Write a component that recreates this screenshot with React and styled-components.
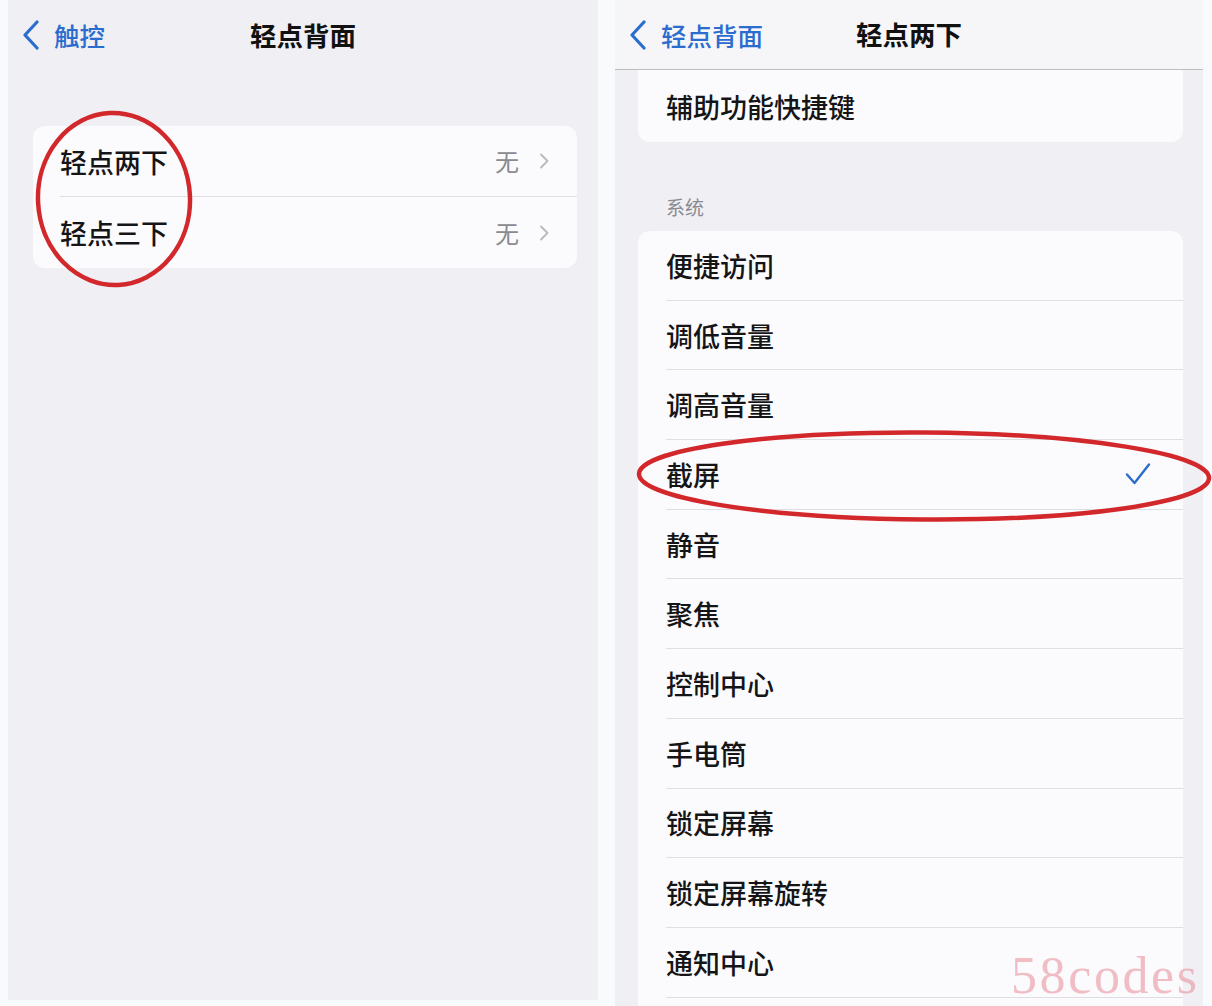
import React from 'react';
import styled, { createGlobalStyle } from 'styled-components';

const BLUE = '#2b6ccf';

const GlobalStyle = createGlobalStyle`
  html, body {
    margin: 0;
    padding: 0;
    background: #f8fafb;
  }
  body {
    font-family: "Noto Sans CJK SC", "Noto Sans", sans-serif;
    color: #151517;
  }
`;

const Page = styled.div`
  position: relative;
  display: flex;
  gap: 17px;
  width: 1212px;
  height: 1006px;
  padding-left: 8px;
  box-sizing: border-box;
  overflow: hidden;
`;

const Screen = styled.section`
  position: relative;
  display: flex;
  flex-direction: column;
  width: ${(p) => p.$width}px;
  height: ${(p) => p.$height}px;
  background: #efeff4;
  overflow: hidden;
  flex-shrink: 0;
`;

const NavBar = styled.header`
  display: grid;
  grid-template-columns: 1fr auto 1fr;
  align-items: center;
  height: 70px;
  padding: 0 14px;
  box-sizing: border-box;
  flex-shrink: 0;
  background: ${(p) => (p.$bar ? '#f6f6f8' : 'transparent')};
  border-bottom: ${(p) => (p.$bar ? '1px solid #bcbcc1' : 'none')};
`;

const BackLink = styled.div`
  display: flex;
  align-items: center;
  gap: 14px;
  color: ${BLUE};
  font-size: 25.5px;
  font-weight: 500;
  line-height: 1;
`;

const NavTitle = styled.h1`
  margin: 0;
  font-size: 26.5px;
  font-weight: 700;
  line-height: 1;
  color: #111;
`;

const Card = styled.div`
  flex-shrink: 0;
  margin: ${(p) => p.$margin};
  background: #fbfbfd;
  border-radius: ${(p) => (p.$flatTop ? '0 0 12px 12px' : '12px')};
  overflow: hidden;
`;

const Row = styled.div`
  display: flex;
  height: ${(p) => p.$h}px;
  padding-left: ${(p) => p.$pad}px;
`;

const RowInner = styled.div`
  flex: 1;
  display: flex;
  align-items: center;
  padding-right: ${(p) => p.$padRight || 0}px;
  border-bottom: ${(p) => (p.$last ? 'none' : '1px solid #dedee3')};
`;

const Label = styled.span`
  flex: 1;
  font-size: 27px;
  font-weight: 500;
  line-height: 1;
  color: #151517;
`;

const Value = styled.span`
  font-size: 24px;
  color: #8a8a8f;
  margin-right: 20px;
  line-height: 1;
`;

const SectionHeader = styled.div`
  flex-shrink: 0;
  padding: 53px 0 0 51px;
  margin-bottom: 12px;
  font-size: 19px;
  line-height: 24px;
  color: #8a8a90;
`;

const Circle = styled.svg`
  position: absolute;
  left: ${(p) => p.$x}px;
  top: ${(p) => p.$y}px;
  overflow: visible;
  pointer-events: none;
`;

const Watermark = styled.div`
  position: absolute;
  left: 1011px;
  top: 950px;
  font-family: "Liberation Serif", serif;
  font-size: 52px;
  letter-spacing: 2.6px;
  line-height: 1;
  color: rgba(232, 128, 142, 0.5);
  pointer-events: none;
`;

function BackChevron() {
  return (
    <svg width="18" height="30" viewBox="0 0 18 30">
      <path d="M15 2 L3 15 L15 28" fill="none" stroke={BLUE} strokeWidth="3.2" strokeLinecap="round" strokeLinejoin="round" />
    </svg>
  );
}

function Disclosure() {
  return (
    <svg width="10" height="16" viewBox="0 0 10 16">
      <path d="M2 1.5 L8.5 8 L2 14.5" fill="none" stroke="#b9b9be" strokeWidth="1.8" strokeLinecap="round" strokeLinejoin="round" />
    </svg>
  );
}

function Check() {
  return (
    <svg width="26" height="24" viewBox="0 0 26 24">
      <path d="M2 12.5 L9.5 21 L24 2.5" fill="none" stroke={BLUE} strokeWidth="2.4" strokeLinecap="round" strokeLinejoin="round" />
    </svg>
  );
}

const tapRows = ['轻点两下', '轻点三下'];

const systemRows = [
  '便捷访问',
  '调低音量',
  '调高音量',
  '截屏',
  '静音',
  '聚焦',
  '控制中心',
  '手电筒',
  '锁定屏幕',
  '锁定屏幕旋转',
  '通知中心',
  '',
];

export default function App() {
  return (
    <>
      <GlobalStyle />
      <Page>
        <Screen $width={590} $height={1000}>
          <NavBar>
            <BackLink>
              <BackChevron />
              触控
            </BackLink>
            <NavTitle>轻点背面</NavTitle>
            <span />
          </NavBar>
          <Card $margin="56px 21px 0 25px">
            {tapRows.map((label, i) => (
              <Row key={label} $h={71} $pad={27}>
                <RowInner $padRight={28} $last={i === tapRows.length - 1}>
                  <Label>{label}</Label>
                  <Value>无</Value>
                  <Disclosure />
                </RowInner>
              </Row>
            ))}
          </Card>
          <Circle $x={27} $y={111} width="160" height="178" viewBox="0 0 160 178">
            <ellipse cx="79" cy="88" rx="76" ry="86" fill="none" stroke="#d3282b" strokeWidth="4.5" transform="rotate(-3 79 88)" />
          </Circle>
        </Screen>

        <Screen $width={588} $height={1006}>
          <NavBar $bar>
            <BackLink>
              <BackChevron />
              轻点背面
            </BackLink>
            <NavTitle>轻点两下</NavTitle>
            <span />
          </NavBar>
          <Card $margin="0 20px 0 23px" $flatTop>
            <Row $h={72} $pad={28}>
              <RowInner $last>
                <Label>辅助功能快捷键</Label>
              </RowInner>
            </Row>
          </Card>
          <SectionHeader>系统</SectionHeader>
          <Card $margin="0 20px 0 23px">
            {systemRows.map((label, i) => (
              <Row key={i} $h={69.7} $pad={28}>
                <RowInner $padRight={32}>
                  <Label>{label}</Label>
                  {label === '截屏' && <Check />}
                </RowInner>
              </Row>
            ))}
          </Card>
        </Screen>

        <Circle $x={635} $y={429} width="578" height="94" viewBox="0 0 578 94">
          <ellipse cx="289" cy="47" rx="285" ry="43.5" fill="none" stroke="#d3282b" strokeWidth="4.5" transform="rotate(0.4 289 47)" />
        </Circle>
        <Watermark>58codes</Watermark>
      </Page>
    </>
  );
}
